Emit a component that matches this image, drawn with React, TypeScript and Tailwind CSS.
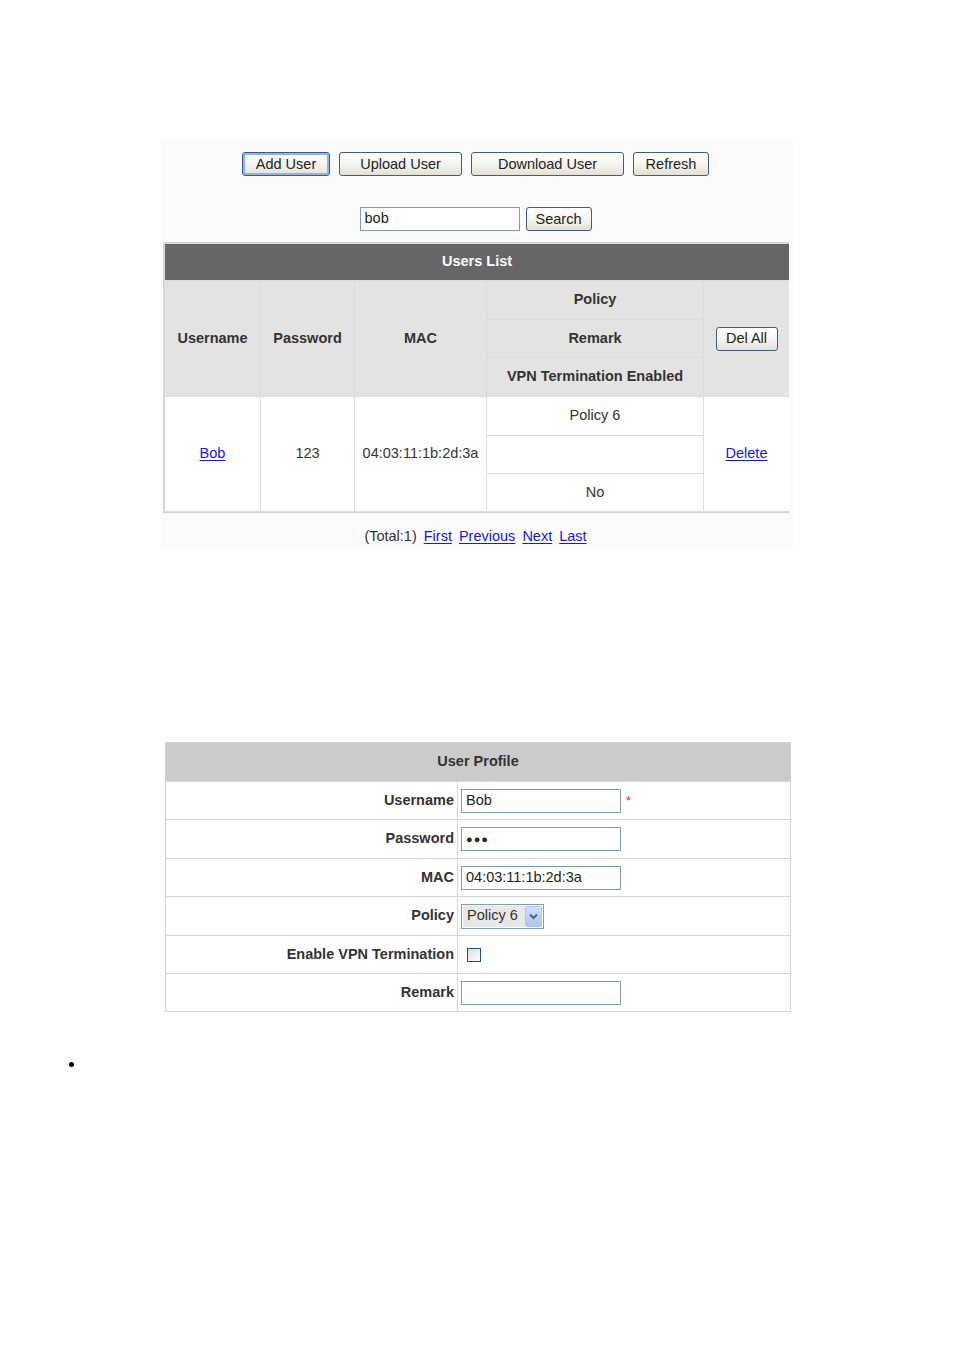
import React from "react";

const font = { fontFamily: '"Liberation Sans", Arial, sans-serif' };

function Btn({ label, w, focused }: { label: string; w: string; focused?: boolean }) {
  return (
    <button
      className={
        "h-[24px] rounded-[3px] border border-[#3d5d85] bg-gradient-to-b from-white via-[#f6f5f0] to-[#e3e0d4] text-[14.5px] font-normal leading-none text-[#222] " +
        w +
        (focused ? " shadow-[inset_0_0_0_2px_#8fb2ee]" : "")
      }
    >
      {label}
    </button>
  );
}

function Link({ children }: { children: React.ReactNode }) {
  return <span className="text-[#1515e6] underline underline-offset-2">{children}</span>;
}

function HeadCell({ children, className = "" }: { children: React.ReactNode; className?: string }) {
  return (
    <div className={"flex items-center justify-center bg-[#e3e3e3] text-[14.5px] font-bold text-[#333] " + className}>
      {children}
    </div>
  );
}

function DataCell({ children, className = "" }: { children?: React.ReactNode; className?: string }) {
  return (
    <div className={"flex items-center justify-center bg-white text-[14.5px] text-[#333] " + className}>
      {children}
    </div>
  );
}

function UsersList() {
  return (
    <div className="ml-[2px] w-[626px] border border-[#d2d2d2] bg-[#dcdcdc] p-[1px]">
      <div className="grid grid-cols-[95px_93px_131px_216px_85px] grid-rows-[36px_38px_37px_38px_38px_37px_37px] gap-[1px]">
        <div className="col-span-5 flex items-center justify-center bg-[#666666] text-[14.5px] font-bold text-white">
          Users List
        </div>
        <HeadCell className="row-span-3">Username</HeadCell>
        <HeadCell className="row-span-3">Password</HeadCell>
        <HeadCell className="row-span-3">MAC</HeadCell>
        <HeadCell>Policy</HeadCell>
        <HeadCell className="row-span-3">
          <Btn label="Del All" w="w-[62px]" />
        </HeadCell>
        <HeadCell className="col-start-4">Remark</HeadCell>
        <HeadCell className="col-start-4">VPN Termination Enabled</HeadCell>
        <DataCell className="row-span-3">
          <Link>Bob</Link>
        </DataCell>
        <DataCell className="row-span-3">123</DataCell>
        <DataCell className="row-span-3">04:03:11:1b:2d:3a</DataCell>
        <DataCell>Policy 6</DataCell>
        <DataCell className="row-span-3">
          <Link>Delete</Link>
        </DataCell>
        <DataCell className="col-start-4" />
        <DataCell className="col-start-4">No</DataCell>
      </div>
    </div>
  );
}

function TextBox({ value, dots }: { value?: string; dots?: boolean }) {
  return (
    <div className="flex h-[24px] w-[160px] items-center border border-[#7f9db9] bg-white pl-[4px] text-[14.5px] text-[#222]">
      {dots ? <span className="text-[11px] tracking-[1px]">●●●</span> : value}
    </div>
  );
}

function ProfileRow({ label, children, h }: { label: string; children: React.ReactNode; h: string }) {
  return (
    <div className={"grid grid-cols-[291px_332px] gap-[1px] " + h}>
      <div className="flex items-center justify-end bg-white pr-[3px] text-[14.5px] font-bold text-[#333]">{label}</div>
      <div className="flex items-center bg-white pl-[3px]">{children}</div>
    </div>
  );
}

function UserProfile() {
  return (
    <div className="ml-[165px] flex w-[626px] flex-col gap-[1px] border border-[#d2d2d2] bg-[#d6d6d6]">
      <div className="flex h-[38px] items-center justify-center bg-[#cbcbcb] text-[14.5px] font-bold text-[#333]">
        User Profile
      </div>
      <ProfileRow label="Username" h="h-[37px]">
        <TextBox value="Bob" />
        <span className="ml-[5px] text-[12px] text-[#e02020]">*</span>
      </ProfileRow>
      <ProfileRow label="Password" h="h-[38px]">
        <TextBox dots />
      </ProfileRow>
      <ProfileRow label="MAC" h="h-[37px]">
        <TextBox value="04:03:11:1b:2d:3a" />
      </ProfileRow>
      <ProfileRow label="Policy" h="h-[38px]">
        <div className="flex h-[25px] w-[83px] items-stretch border border-[#7f9db9] bg-white p-[1px]">
          <div className="flex flex-1 items-center bg-[#e8e8e8] pl-[4px] text-[14.5px] text-[#333]">Policy 6</div>
          <div className="flex w-[17px] items-center justify-center rounded-[2px] border border-[#b0c6f4] bg-gradient-to-b from-[#d0dcfb] to-[#aec4f5]">
            <svg width="9" height="7" viewBox="0 0 9 7">
              <path d="M1 1.5 L4.5 5 L8 1.5" fill="none" stroke="#4d6185" strokeWidth="2" />
            </svg>
          </div>
        </div>
      </ProfileRow>
      <ProfileRow label="Enable VPN Termination" h="h-[37px]">
        <div className="ml-[6px] h-[14px] w-[14px] border border-[#1c5180] bg-gradient-to-br from-[#dcdcd7] to-white" />
      </ProfileRow>
      <ProfileRow label="Remark" h="h-[37px]">
        <TextBox />
      </ProfileRow>
    </div>
  );
}

export default function App() {
  return (
    <div className="min-h-[1350px] w-full bg-white pt-[138px]" style={font}>
      <div className="mx-auto flex w-[632px] flex-col bg-[#fbfbfb] pb-[1px] pt-[14px]">
        <div className="flex justify-center gap-[9px] pr-[3px]">
          <Btn label="Add User" w="w-[88px]" focused />
          <Btn label="Upload User" w="w-[123px]" />
          <Btn label="Download User" w="w-[153px]" />
          <Btn label="Refresh" w="w-[76px]" />
        </div>
        <div className="mt-[31px] flex justify-center gap-[6px] pr-[3px]">
          <TextBox value="bob" />
          <Btn label="Search" w="w-[66px]" />
        </div>
        <div className="mt-[11px]">
          <UsersList />
        </div>
        <div className="mt-[14px] flex h-[20px] items-center justify-center gap-[7px] pr-[3px] text-[14.5px] text-[#333]">
          <span>(Total:1)</span>
          <Link>First</Link>
          <Link>Previous</Link>
          <Link>Next</Link>
          <Link>Last</Link>
        </div>
      </div>
      <div className="mt-[194px]">
        <UserProfile />
      </div>
      <div className="mt-[50px] pl-[69px]">
        <div className="h-[5px] w-[5px] rounded-full bg-black" />
      </div>
    </div>
  );
}
